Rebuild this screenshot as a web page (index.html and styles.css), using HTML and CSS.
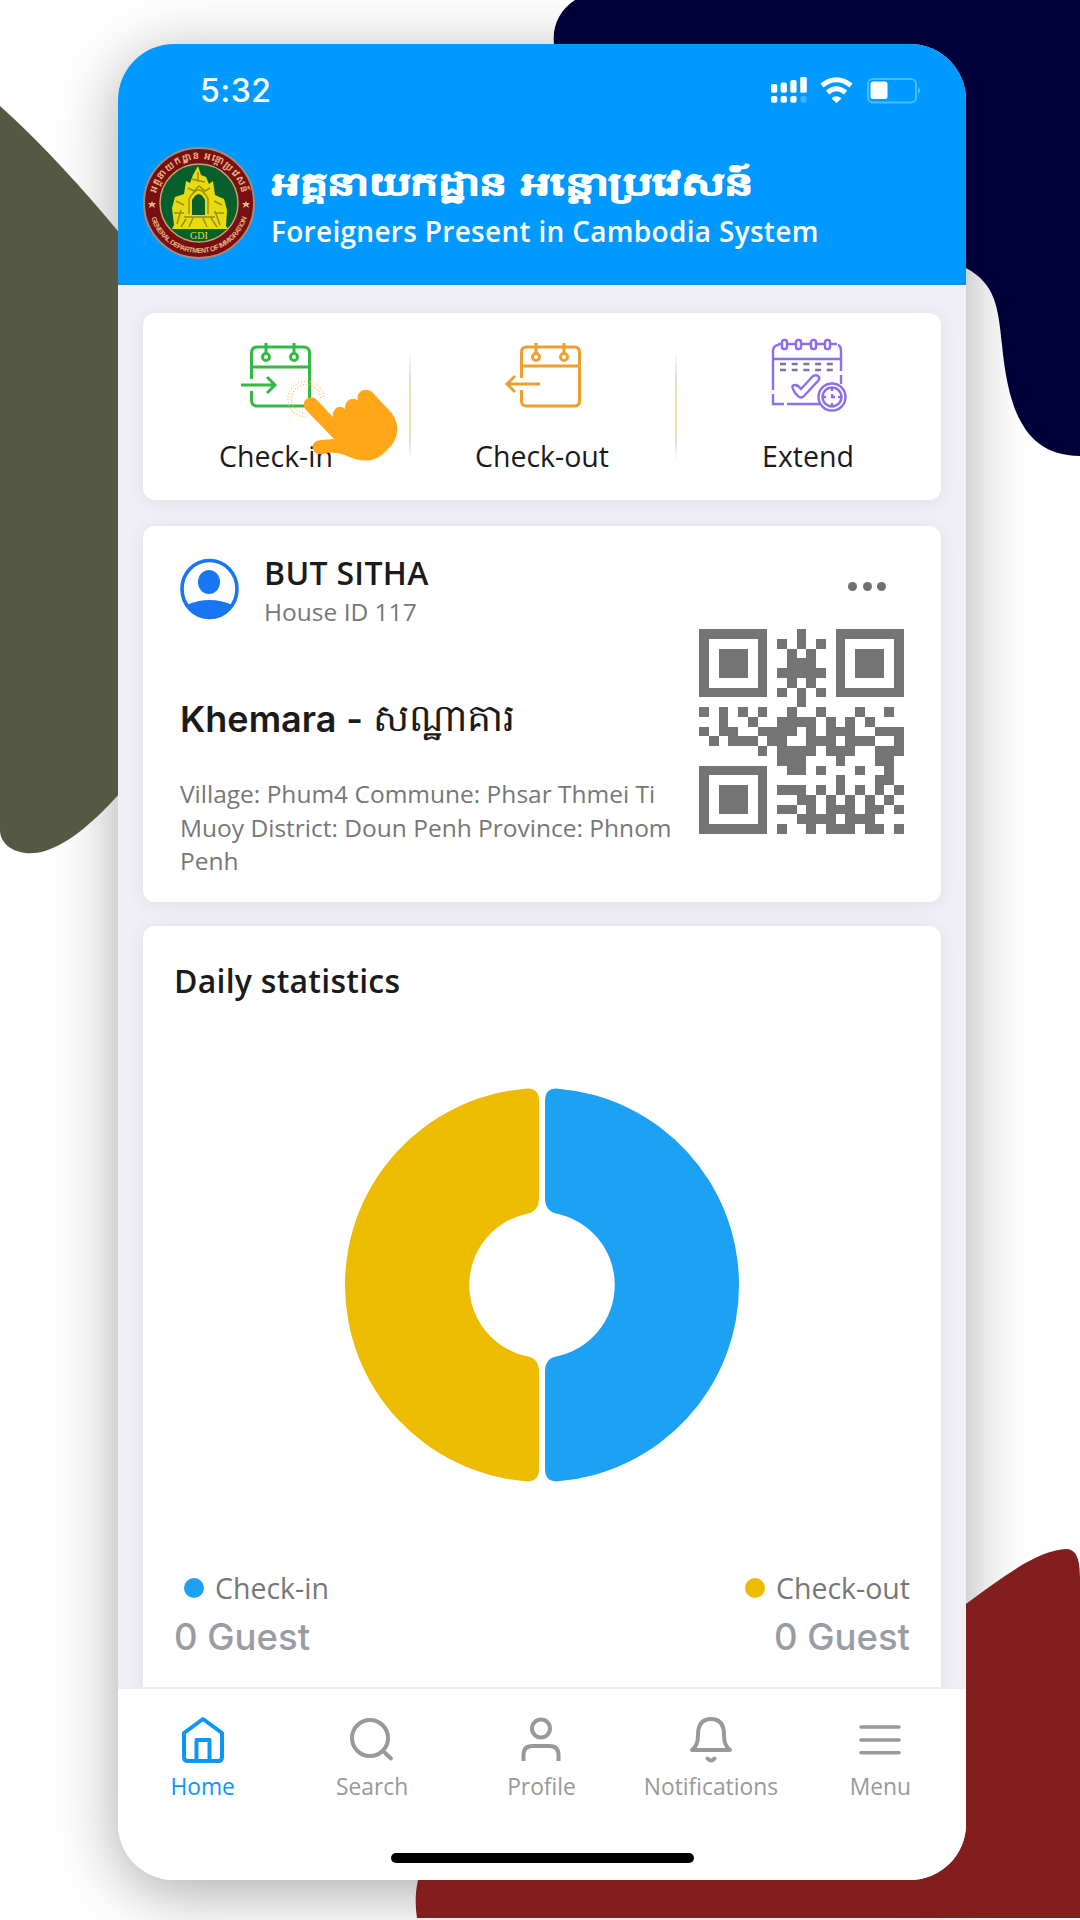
FILE: index.html
```html
<!DOCTYPE html>
<html lang="en">
<head>
<meta charset="utf-8">
<title>Foreigners Present in Cambodia System</title>
<link rel="stylesheet" href="styles.css">
</head>
<body>
<svg class="backdrop" viewBox="0 0 1080 1920" aria-hidden="true">
  <path fill="#555843" d="M0 106C40 142 80 185 122 236V791C96 820 70 843 45 851C22 858 0 848 0 830Z"/>
  <path fill="#000038" d="M575 0C560 10 552 25 554 44V80H940V258L966 268C995 284 998 305 1002 345C1008 405 1022 456 1080 456V0Z"/>
  <path fill="#821e1e" d="M960 1608C1000 1580 1035 1550 1067 1549C1077 1550 1080 1560 1080 1578V1918H417C414 1900 416 1880 424 1860H800V1700H960Z"/>
</svg>
<main class="phone">
  <header class="header">
    <div class="status">
      <span class="time">5:32</span>
      <svg class="status-icons" viewBox="0 0 152 30">
        <g fill="#fff">
          <rect x="1" y="9" width="6.300" height="8.700" rx="2"/><rect x="10.600" y="7.500" width="6.300" height="10.200" rx="2"/><rect x="20.300" y="5" width="6.300" height="12.700" rx="2"/><rect x="30.200" y="2" width="6.600" height="15.700" rx="1.500"/>
          <rect x="1" y="21" width="6.300" height="6.700" rx="2"/><rect x="10.600" y="21" width="6.300" height="6.700" rx="2"/><rect x="20.300" y="21" width="6.300" height="6.700" rx="2"/><rect x="30.500" y="21" width="6" height="6.700" rx="2" opacity=".25"/>
          <path d="M61.500 23.500Q66.500 19 71.500 23.500L66.500 28Z"/>
          <rect x="100.500" y="6.500" width="17" height="17.500" rx="2.500"/>
        </g>
        <path fill="none" stroke="#fff" stroke-width="5" d="M52 10.500Q66.500-1 81 10.500M57.500 17.500Q66.500 10 75.500 17.500"/>
        <rect x="98" y="4" width="48" height="23.500" rx="5" fill="none" stroke="#45bfff" stroke-width="2"/>
        <path fill="#45bfff" d="M148 12q4 3.500 0 7z"/>
      </svg>
    </div>
    <div class="brand">
      <svg class="seal" viewBox="0 0 112 112">
        <defs><path id="arc-top" d="M12 56A44 44 0 0 1 100 56"/><path id="arc-bottom" d="M6 56A50 50 0 0 0 106 56"/></defs>
        <circle cx="56" cy="56" r="55" fill="#780f12" stroke="#a98a78" stroke-width="2"/>
        <circle cx="56" cy="56" r="39" fill="#075f2b" stroke="#c7a06c" stroke-width="1.500"/>
        <text class="seal-text seal-khmer"><textPath href="#arc-top" startOffset="10" textLength="118">អគ្គនាយកដ្ឋាន អន្តោប្រវេសន៍</textPath></text>
        <text class="seal-text"><textPath href="#arc-bottom" startOffset="15" textLength="127">GENERAL DEPARTMENT OF IMMIGRATION</textPath></text>
        <path fill="#e9b282" d="m9 54 1 2 3 0-2 2 1 3-3-2-3 2 1-3-2-2 3 0zm94 0 1 2 3 0-2 2 1 3-3-2-3 2 1-3-2-2 3 0z"/>
        <path fill="#e8dc10" d="M55 19l3 9 5 2 3 7 4-3 2 14 9 4 3 11-1 16 2 3H29l2-4-2-17 3-11 9-3 2-13 4 2 3-8z"/>
        <path fill="#075f2b" d="M49 68V53q7-12 13 0v15z"/>
        <path fill="none" stroke="#9b8f09" stroke-width="1.500" d="M46 67V52q10-18 19 0v15M45 41l6 3 5-5 6 5 5-3M55 25v10M48 32l14 3M33 54l8 4M31 66h10M34 77l4-14M71 54l8 4M71 66h10M77 78l-5-14M43 72l-5 8M50 71l-4 9M60 71l4 9M68 71l6 9M41 70h31"/>
        <text x="56" y="92" text-anchor="middle" class="seal-gdi">GDI</text>
      </svg>
      <div class="brand-text">
        <svg class="brand-khmer" viewBox="0 0 484 56"><text x="1" y="39" textLength="235" lengthAdjust="spacingAndGlyphs">អគ្គនាយកដ្ឋាន</text><text x="250" y="39" textLength="232" lengthAdjust="spacingAndGlyphs">អន្តោប្រវេសន៍</text></svg>
        <p class="brand-title">Foreigners Present in Cambodia System</p>
      </div>
    </div>
  </header>

  <div class="content">
    <section class="card actions">
      <div class="action">
        <svg class="action-icon" viewBox="0 0 76 76" fill="none" stroke="#36b944" stroke-width="3">
          <path d="M13.500 36V10q0-6 6-6h46q6 0 6 6v47q0 6-6 6h-46q-6 0-6-6V48M13 24h58M28 0v10M56 0v10M3 42h34M29 34l8 8-8 8"/><circle cx="28" cy="14" r="3.500"/><circle cx="56" cy="14" r="3.500"/>
        </svg>
        <span>Check-in</span>
        <svg class="pointer" viewBox="0 0 120 84">
          <g fill="none" stroke="#ffb84d" stroke-width="1.200" stroke-dasharray="1 2"><path d="M38 35A18 18 0 1 1 56 17"/><path d="M38 31.500A14.500 14.500 0 1 1 52.500 17"/></g>
          <path fill="#ffa619" d="M38 28C32 21 39 12 48 17L65 35C64 26 72 22 77 27C76 18 86 14 90 19C87 9 98 5 104 10L122 29C133 42 131 58 119 68C106 83 91 79 79 74C70 70 61 70 54 72C45 74 41 62 49 59C54 57 60 58 66 57Z"/>
        </svg>
      </div>
      <div class="action divided">
        <svg class="action-icon" viewBox="0 0 76 76" fill="none" stroke="#eda02d" stroke-width="3">
          <path d="M17.500 35V9q0-5 5-5h48q5 0 5 5v49q0 5-5 5h-48q-5 0-5-5V47M17 23h58M32 0v10M60 0v10M36 41H3M11 33l-8 8 8 8"/><circle cx="32" cy="14" r="3.500"/><circle cx="60" cy="14" r="3.500"/>
        </svg>
        <span>Check-out</span>
      </div>
      <div class="action divided">
        <svg class="action-icon" viewBox="0 2 76 76" fill="none" stroke="#8b70ee" stroke-width="2.400">
          <path d="M9 4Q3 4 3 10V49M3 53v10h11M17 63h34M68 4q3 1 3 6v20M71 34v9M3 18h68"/>
          <path d="M8 3h4M18 3h8M32 3h8M46 3h8M60 3h7"/>
          <rect x="12" y="-1" width="5" height="9" rx="2"/><rect x="26" y="-1" width="5" height="9" rx="2"/><rect x="41" y="-1" width="5" height="9" rx="2"/><rect x="55" y="-1" width="5" height="9" rx="2"/>
          <path stroke="#81719d" stroke-dasharray="6 5.700" d="M10 23h54M10 29h54"/>
          <path d="M23 48q-2-4 2-4 3 0 6 4L43 35q4-2 6 1 1 3-2 5L34 55q-3 3-6 0-3-2-5-7Z"/>
          <circle cx="62" cy="56" r="13.500"/><circle cx="62" cy="56" r="9.500"/>
          <path d="M62 47v3M62 62v3M53 56h3M68 56h3M62 53v3h3"/>
        </svg>
        <span>Extend</span>
      </div>
    </section>

    <section class="card house">
      <div class="house-info">
        <div class="owner">
          <svg class="avatar" viewBox="0 0 60 62"><ellipse cx="29.500" cy="31" rx="27.500" ry="28.500" fill="none" stroke="#1876f2" stroke-width="3.600"/><ellipse cx="29" cy="24" rx="11" ry="12" fill="#1876f2"/><path fill="#1876f2" d="M6.500 47Q29.500 37 52.500 47Q43.500 60 29.500 60Q15.500 60 6.500 47Z"/></svg>
          <div><h2 class="owner-name">BUT SITHA</h2><p class="owner-id">House ID 117</p></div>
        </div>
        <div class="house-name"><b>Khemara</b><b>-</b><svg class="house-khmer" viewBox="0 0 144 56"><text x="0" y="40" textLength="142" lengthAdjust="spacingAndGlyphs">សណ្ឋាគារ</text></svg></div>
        <p class="address">Village: Phum4 Commune: Phsar Thmei Ti<br>Muoy District: Doun Penh Province: Phnom<br>Penh</p>
      </div>
      <div class="house-code">
        <div class="more"><i></i><i></i><i></i></div>
        <svg class="qr" viewBox="0 0 21 21" shape-rendering="crispEdges">
          <path fill="#747474" fill-rule="evenodd" d="M0 0h7v7H0zM1 1v5h5V1zM2 2h3v3H2zM14 0h7v7h-7zM15 1v5h5V1zM16 2h3v3h-3zM0 14h7v7H0zM1 15v5h5v-5zM2 16h3v3H2z"/>
          <path fill="#747474" d="M10 0h1v2h-1zM8 1h1v1h-1zM12 1h1v1h-1zM9 2h1v1h-1zM11 2h1v1h-1zM9 3h3v1h-3zM8 4h5v1h-5zM9 5h1v1h-1zM11 5h1v1h-1zM8 6h1v1h-1zM10 6h1v2h-1zM12 6h1v1h-1zM0 8h1v1h-1zM2 8h1v1h-1zM4 8h1v1h-1zM6 8h1v1h-1zM9 8h1v1h-1zM12 8h1v1h-1zM16 8h1v1h-1zM19 8h1v1h-1zM2 9h1v1h-1zM5 9h1v1h-1zM8 9h4v1h-4zM13 9h1v1h-1zM15 9h1v1h-1zM17 9h1v1h-1zM0 10h1v1h-1zM2 10h2v1h-2zM6 10h4v1h-4zM11 10h1v1h-1zM13 10h3v1h-3zM18 10h3v1h-3zM1 11h1v1h-1zM3 11h3v1h-3zM7 11h2v1h-2zM11 11h3v1h-3zM15 11h3v1h-3zM20 11h1v1h-1zM6 12h1v1h-1zM8 12h4v1h-4zM13 12h3v1h-3zM18 12h3v1h-3zM8 13h3v1h-3zM14 13h1v1h-1zM18 13h2v1h-2zM9 14h2v1h-2zM12 14h1v1h-1zM16 14h1v1h-1zM19 14h1v1h-1zM14 15h1v1h-1zM18 15h2v1h-2zM8 16h3v1h-3zM12 16h1v1h-1zM14 16h1v1h-1zM16 16h1v1h-1zM18 16h1v1h-1zM20 16h1v1h-1zM10 17h2v1h-2zM13 17h1v1h-1zM15 17h1v1h-1zM17 17h1v1h-1zM19 17h1v1h-1zM8 18h2v1h-2zM11 18h1v1h-1zM13 18h3v1h-3zM17 18h2v1h-2zM20 18h1v1h-1zM10 19h4v1h-4zM15 19h3v1h-3zM8 20h1v1h-1zM11 20h1v1h-1zM13 20h3v1h-3zM17 20h2v1h-2zM20 20h1v1h-1z"/>
        </svg>
      </div>
    </section>

    <section class="card stats">
      <h2 class="stats-title">Daily statistics</h2>
      <svg class="donut" viewBox="-198 -198 396 396">
        <path fill="#1da1f2" d="M3-184Q3-197 16-196.350A197 197 0 0 1 16 196.350Q3 197 3 184V87Q3 74 14 71.600A73 73 0 0 0 14-71.600Q3-74 3-87Z"/>
        <path fill="#edbc00" d="M-3-184Q-3-197-16-196.350A197 197 0 0 0-16 196.350Q-3 197-3 184V87Q-3 74-14 71.600A73 73 0 0 1-14-71.600Q-3-74-3-87Z"/>
      </svg>
      <div class="legend">
        <div><p class="legend-label"><i class="dot dot-in"></i>Check-in</p><p class="guests">0 Guest</p></div>
        <div><p class="legend-label"><i class="dot dot-out"></i>Check-out</p><p class="guests">0 Guest</p></div>
      </div>
    </section>
  </div>

  <nav class="tabs">
    <div class="tab-row">
      <div class="tab active"><svg viewBox="0 0 48 50"><path d="M24 4 43 18v24q0 4-4 4H9q-4 0-4-4V18ZM17.500 46V25h13v21"/></svg><span>Home</span></div>
      <div class="tab"><svg viewBox="0 0 48 50"><circle cx="22" cy="23" r="18"/><path d="m35 36 8 7.500"/></svg><span>Search</span></div>
      <div class="tab"><svg viewBox="0 0 48 50"><circle cx="24" cy="13.500" r="9"/><path stroke-linecap="butt" d="M6.500 46v-6q0-9 9-9h17q9 0 9 9v6"/></svg><span>Profile</span></div>
      <div class="tab"><svg viewBox="0 0 48 50"><path d="M5 35h38Q37 31 37 20Q37 4 24 4T11 20Q11 31 5 35ZM20.500 43.500q3.500 4 7 0"/></svg><span>Notifications</span></div>
      <div class="tab"><svg viewBox="0 0 48 50"><path stroke-width="3.600" d="M5 12h38M5 25h38M5 37.700h38"/></svg><span>Menu</span></div>
    </div>
    <div class="home-bar"></div>
  </nav>
</main>
</body>
</html>
```

FILE: styles.css
```css
* { box-sizing: border-box; }
body { margin: 0; width: 1080px; height: 1920px; overflow: hidden; background: #fff; font-family: "Open Sans", sans-serif; color: #1b1b1b; }
h2, p { margin: 0; }
svg { display: block; }
.backdrop { position: absolute; left: 0; top: 0; width: 1080px; height: 1920px; }
.phone { position: relative; display: flex; flex-direction: column; width: 848px; height: 1836px; margin: 44px 0 0 118px; border-radius: 56px; overflow: hidden; background: #f0eff6; }
body::before { content: ""; position: absolute; left: 118px; top: 44px; width: 848px; height: 1836px; border-radius: 56px; box-shadow: 0 12px 65px rgba(0,0,0,.34); z-index: 0; }
.header { height: 241px; flex: none; background: #09f; border-bottom: 2px solid #168cd4; }
.status { display: flex; justify-content: space-between; align-items: flex-start; height: 100px; padding: 28px 44px 0 82px; color: #fff; }
.time { font-family: Inter, sans-serif; font-size: 32px; font-weight: 500; line-height: 38px; letter-spacing: .6px; }
.status-icons { width: 152px; height: 30px; margin-top: 3px; }
.brand { display: flex; padding-left: 25px; gap: 16px; }
.seal { width: 112px; height: 112px; margin-top: 3px; }
.seal-text { font-family: "Liberation Sans", sans-serif; font-size: 7px; font-weight: 700; fill: #e9b282; }
.seal-khmer { font-size: 9.5px; }
.seal-gdi { font-family: "Liberation Serif", serif; font-size: 10px; fill: #e8dc50; }
.brand-khmer { width: 484px; height: 56px; margin-top: 12px; overflow: visible; }
.brand-khmer text { font-size: 32px; font-weight: 700; fill: #fff; stroke: #fff; stroke-width: .8px; }
.brand-title { font-size: 28px; line-height: 38px; font-weight: 600; color: #fff; white-space: nowrap; letter-spacing: .3px; }
.content { flex: 1; min-height: 0; overflow: hidden; display: flex; flex-direction: column; gap: 24px; padding: 28px 25px 0; }
.card { background: #fff; border-radius: 12px; box-shadow: 0 2px 18px rgba(60,60,120,.09); flex: none; }
.actions { display: grid; grid-template-columns: repeat(3, 1fr); height: 187px; margin-bottom: 2px; }
.action { position: relative; display: flex; flex-direction: column; align-items: center; padding-top: 30px; font-size: 28.5px; line-height: 38px; }
.action-icon { width: 76px; height: 76px; overflow: visible; }
.action span { margin-top: 18px; }
.divided::before { content: ""; position: absolute; left: 0; top: 38px; width: 2px; height: 110px; background: linear-gradient(#fff, #ddd 25%, #f1e3a0 40%, #f1e3a0 75%, #ddd 80%, #fff); }
.pointer { position: absolute; left: 125px; top: 69px; width: 120px; height: 84px; overflow: visible; z-index: 1; }
.house { display: flex; justify-content: space-between; height: 376px; padding: 30px 37px 0 37px; }
.owner { display: flex; gap: 24px; }
.avatar { width: 60px; height: 62px; margin-top: 2px; }
.owner-name { font-size: 32px; line-height: 34px; font-weight: 600; white-space: nowrap; letter-spacing: .3px; }
.owner-id { font-size: 24.5px; line-height: 34px; margin-top: 5px; color: #777; }
.house-name { display: flex; align-items: center; gap: 10px; height: 56px; margin-top: 62px; font-size: 36px; white-space: nowrap; }
.house-name b { font-family: Inter, sans-serif; font-weight: 600; }
.house-khmer { width: 144px; height: 56px; overflow: visible; }
.house-khmer text { font-size: 38px; font-weight: 300; fill: #1b1b1b; }
.address { margin-top: 30px; font-size: 24.500px; line-height: 33.500px; color: #777; white-space: nowrap; }
.house-code { width: 205px; }
.more { display: flex; justify-content: flex-end; gap: 5.5px; height: 9px; margin: 26px 18px 38px 0; }
.more i { width: 9px; height: 9px; border-radius: 50%; background: #707070; }
.qr { width: 205px; height: 205px; }
.stats { height: 780px; padding: 36px 31px 0; }
.stats-title { font-size: 32px; line-height: 38px; font-weight: 600; letter-spacing: .25px; }
.donut { width: 396px; height: 396px; margin: 87px auto 0; }
.legend { display: flex; justify-content: space-between; margin-top: 86px; }
.legend > div:last-child { text-align: right; }
.legend-label { display: flex; align-items: center; gap: 11px; padding-left: 10px; font-size: 28.5px; line-height: 38px; color: #777; }
.dot { width: 20px; height: 20px; border-radius: 50%; }
.dot-in { background: #1da1f2; }
.dot-out { background: #edbc00; }
.guests { margin-top: 9px; font-family: Inter, sans-serif; font-size: 36.5px; line-height: 42px; font-weight: 500; color: #999ca2; }
.tabs { height: 193px; flex: none; background: #fff; border-top: 2px solid #eeeef2; }
.tab-row { display: grid; grid-template-columns: repeat(5, 1fr); height: 164px; padding: 26px 1px 0 0; }
.tab { display: flex; flex-direction: column; align-items: center; font-size: 22.8px; line-height: 31px; color: #999; }
.tab svg { width: 48px; height: 50px; fill: none; stroke: currentColor; stroke-width: 4; stroke-linejoin: round; stroke-linecap: round; }
.tab span { margin-top: 6px; }
.tab.active { color: #0b97f5; }
.home-bar { width: 303px; height: 10px; margin: 0 auto; border-radius: 5px; background: #000; }
```
